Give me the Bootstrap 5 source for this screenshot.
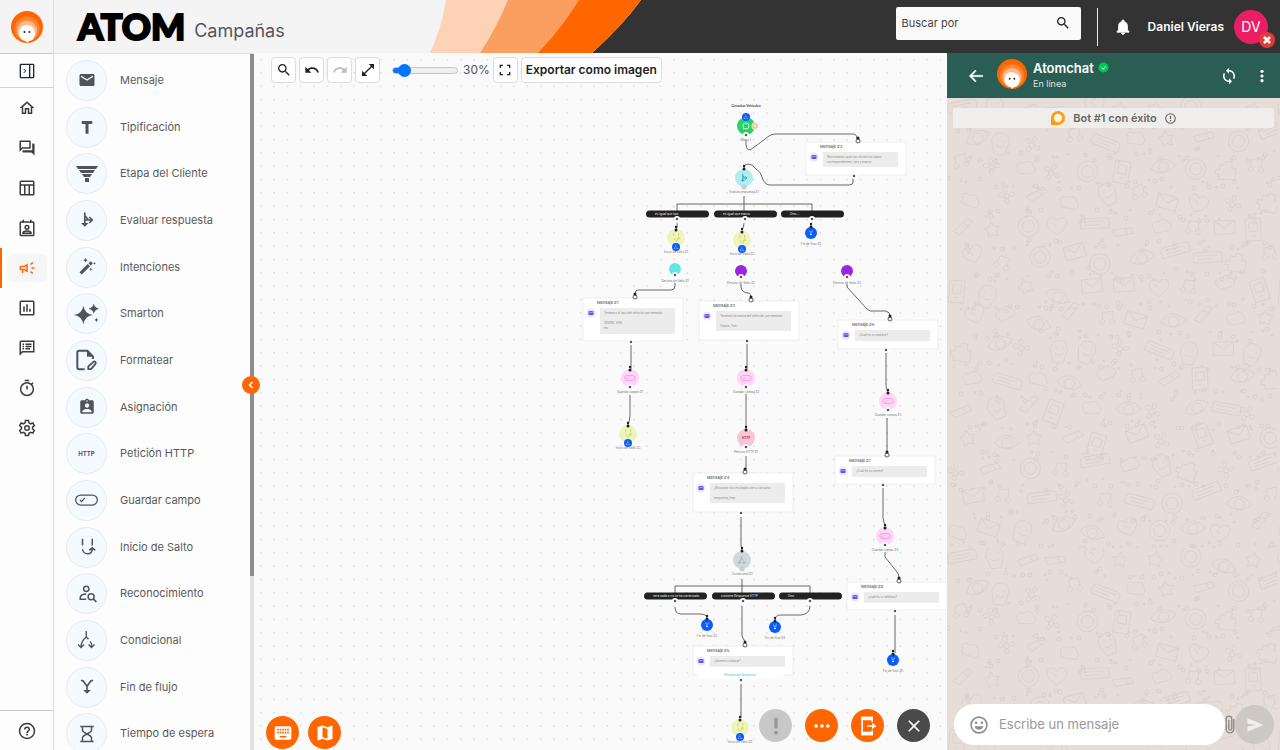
<!DOCTYPE html>
<html lang="es">
<head>
<meta charset="utf-8">
<meta name="viewport" content="width=device-width, initial-scale=1">
<title>ATOM Campañas</title>
<link href="https://cdn.jsdelivr.net/npm/bootstrap@5.3.0/dist/css/bootstrap.min.css" rel="stylesheet">
<style>
body{font-family:Inter,"Liberation Sans",sans-serif;font-size:12px;color:#333;background:#fafafa}
svg{display:block;fill:currentColor}
.ln{fill:none;stroke:currentColor;stroke-width:2}
.mid{display:grid;place-items:center}
.btn{--bs-btn-font-size:12px;--bs-btn-padding-x:0;--bs-btn-padding-y:0}
.rail{width:54px;background:#fdfdfd;border-right:1px solid #dedede;color:#3d3b3b}
.rail-logo{height:54px;background:#f4f4f4;border-bottom:1px solid #c9c9c9}
.rail-toggle{height:34px;border-bottom:1px solid #d4d4d4}
.rail-toggle svg{width:16px;height:16px}
.rail a{color:#3d3b3b;height:40px}
.rail a svg{width:18px;height:18px}
.rail a.active{color:#ff6600;box-shadow:inset 2px 0 #ff6600}
.rail a.active span{background:#f6f6f6;border-radius:6px}
.rail a span{width:40px;height:28px;display:grid;place-items:center}
.rail-help{border-top:1px solid #c9c9c9}
.topbar{height:53px;background:#f4f4f4}
.brand-zone{flex:0 0 376px;padding-left:24px;gap:9px}
.brand-word{font-family:Lato,Inter,sans-serif;font-weight:900;font-size:36px;line-height:53px;color:#000;-webkit-text-stroke:2px #000}
.brand-page{font-size:18px;line-height:24px;color:#55555f;padding-top:8px}
.top-dark{background:#333;color:#fff;padding-right:12px}
.user-name{margin:0 10px 0 16px}
.find{width:185px;height:33px;background:#fafafa;border-radius:2px;padding:0 10px 0 6px;color:#222;margin-top:-7px}
.find input{font-size:11px;color:#444;background:none;outline:0}
.find input::placeholder{color:#444}
.split-bar{width:1px;height:38px;background:#e8e8e8;margin:0 16px}
.avatar{width:34px;height:34px;background:#e91e63;font-size:14px}
.avatar-x{width:16px;height:16px;background:#e23b3b;right:-7px;bottom:-4px}
.palette{width:200px;background:#fdfdfd;border-top:1px solid #dedede}
.palette-list{min-height:708px;padding:3px 0 5px 12px}
.palette-list .btn{flex:1 0 0;gap:13px;color:#5a5a5a;border:0;font-size:11px}
.disc{width:41px;height:41px;border:1px solid #e4eaf8;background:#f4faff;color:#50535a}
.disc svg{width:18px;height:18px}
.disc .wide{width:24px}
.disc .big{width:25px;height:22px}
.disc-word{font-size:6px}
.track{width:4px;background:#e2e2e2}
.thumb{height:75%;background:#8c8c8c}
.fold{width:18px;height:18px;background:#ff6600;right:-6px;top:322px;z-index:3}
.board{background:#fafafa radial-gradient(circle,#e4e4e4 1px,transparent 1px) 0 0/calc(40px/3) calc(40px/3)}
.tools{top:4px;left:17px;gap:3px}
.tools .btn{height:26px;min-width:25px;background:#fff;border:1px solid #dcdcdc;border-radius:4px;color:#222}
.tools .btn:disabled{color:#bbb;opacity:1;background:#fff;border-color:#dcdcdc}
.tools svg{width:16px;height:16px}
.tools input{width:66px;height:12px;margin:0 2px 0 9px;appearance:none;background:none}
.tools output{color:#555}
.tools input::-webkit-slider-runnable-track{height:7px;border-radius:4px;border:1px solid #c6c6c6;background:linear-gradient(90deg,#0075ff 12px,#efefef 12px)}
.tools input::-webkit-slider-thumb{appearance:none;width:13px;height:13px;margin-top:-4px;border-radius:50%;background:#0075ff}
.fab{width:33px;height:33px;background:#ff6600;color:#fff;border:0;border-radius:50%;display:grid;place-items:center}
.fab svg{width:20px;height:20px}
.fab-off,.fab-off:disabled{background:#c8c8c8;color:#999;opacity:1}
.fab-dark{background:#4a4a4a}
.fabs-left{left:12px;bottom:1px;gap:9px}
.fabs-right{right:17px;bottom:8px;gap:13px}
.flow-label{font-size:3px;fill:#777;text-anchor:middle}
.flow-title{font-size:4px;fill:#333}
.flow-body{font-size:3px;fill:#888}
.flow-cond{font-size:3px;fill:#eee}
.flow-head{fill:#333;font-weight:600}
.flow-http{fill:#d81b50;font-weight:700}
.flow-fast{fill:#3fc1e0}
.chat{width:333px;background:#e6ddd8}
.chat-head{height:45px;background:#2a5d53;color:#fff;padding:0 10px 0 20px}
.chat-who{margin-left:6px}
.chat-name{font-size:13px;line-height:16px}
.chat-state{font-size:9px;line-height:16px;color:#dbe6e3}
.doodle{color:#d5cbc5;inset:45px 0 0 0;width:100%;height:100%}
.notice{height:20px;margin:10px 6px;background:#f0eeed;font-size:11px;border-radius:2px;color:#666}
.composer{padding:0 6px 5px 7px}
.pill{height:41px;background:#fff;border-radius:21px;padding:0 16px;gap:11px;color:#8d8d8d;width:271px}
.pill input{font-size:13px;outline:0;color:#555}
.pill input::placeholder{color:#999}
.clip{color:#8a8785}
.send{width:39px;height:39px;background:#cdc8c4;color:#f2f0ee;border:0}
</style>
</head>
<body class="vh-100 d-flex overflow-hidden">
<svg width="0" height="0" class="position-absolute" aria-hidden="true">
<defs>
<symbol id="i-atom" viewBox="0 0 32 32"><circle cx="16" cy="16" r="16" fill="#ff6600"/><circle cx="16" cy="18" r="12.5" fill="#ff8534"/><circle cx="16" cy="19.5" r="10" fill="#ffb888"/><path d="M16 14a8 8 0 0 0-7 12q1 3 6 4l1 2 2-2q6-1 6-8a8 8 0 0 0-8-8z" fill="#fff"/><circle cx="13.5" cy="21" r="1" fill="#222"/><circle cx="18.5" cy="21" r="1" fill="#222"/></symbol>
<symbol id="i-search" viewBox="0 0 24 24"><path d="M15.5 14h-.79l-.28-.27C15.41 12.59 16 11.11 16 9.5 16 5.91 13.09 3 9.5 3S3 5.91 3 9.5 5.91 16 9.5 16c1.61 0 3.09-.59 4.23-1.57l.27.28v.79l5 4.99L20.49 19l-4.99-5zm-6 0C7.01 14 5 11.99 5 9.5S7.01 5 9.5 5 14 7.01 14 9.5 11.99 14 9.5 14z"/></symbol>
<symbol id="i-mail" viewBox="0 0 24 24"><path d="M20 4H4c-1.1 0-2 .9-2 2v12c0 1.1.9 2 2 2h16c1.1 0 2-.9 2-2V6c0-1.1-.9-2-2-2zm0 4l-8 5-8-5V6l8 5 8-5v2z"/></symbol>
<symbol id="i-campo" viewBox="0 0 30 20"><g fill="none" stroke="currentColor" stroke-width="1.5"><rect x="2" y="4" width="26" height="12" rx="6"/><path d="M7 10l2 2 4-4.5"/></g></symbol>
<symbol id="i-salto" viewBox="0 0 24 24"><g fill="none" stroke="currentColor" stroke-width="2"><path d="M6 1v9M19 1v9M6 15q1 6 7 6 6 0 6-7M15 16.500l4-3.500 4 3.500"/></g></symbol>
<symbol id="i-cond" viewBox="0 0 24 24"><g fill="none" stroke="currentColor" stroke-width="1.8"><path d="M11 0v8Q4 14 4 21M11 8l3 3M16 14l2 3v5M0 18l4 4 4-4M14 18l4 4 4-4"/></g></symbol>
<symbol id="i-fin" viewBox="0 0 24 24"><g fill="none" stroke="currentColor" stroke-width="2.2"><path d="M4 3l3 1 5 7 5-7 3-1M12 11v8"/></g><path d="M7 16h10l-5 5z"/></symbol>
<symbol id="i-eval" viewBox="0 0 24 24"><g fill="none" stroke="currentColor" stroke-width="2.2"><path d="M9 2v17M9 12h10M15 8l4 4-4 4M9 6l5 6"/></g><path d="M4 16h10l-5 5z"/></symbol>
</defs>
</svg>

<nav class="rail d-flex flex-column flex-shrink-0" aria-label="Principal">
  <div class="rail-logo mid"><svg width="32" height="32"><use href="#i-atom"/></svg></div>
  <button class="rail-toggle btn rounded-0 border-top-0 border-start-0 border-end-0 d-flex align-items-center justify-content-center" aria-label="Expandir menú"><svg viewBox="0 0 24 24"><g class="ln"><rect x="2" y="2" width="20" height="20" rx="1"/><path d="M16 2v20"/><path d="M7 9l3 3-3 3" stroke-width="1.5"/></g></svg></button>
  <a href="#" class="d-flex align-items-center justify-content-center" aria-label="Inicio"><span><svg viewBox="0 0 24 24"><path d="M12 5.69l5 4.5V18h-2v-6H9v6H7v-7.81l5-4.5M12 3L2 12h3v8h6v-6h2v6h6v-8h3L12 3z"/></svg></span></a>
  <a href="#" class="d-flex align-items-center justify-content-center" aria-label="Chats"><span><svg viewBox="0 0 24 24"><path d="M15 4v7H5.17L4 12.17V4h11m1-2H3c-.55 0-1 .45-1 1v14l4-4h10c.55 0 1-.45 1-1V3c0-.55-.45-1-1-1zm5 4h-2v9H6v2c0 .55.45 1 1 1h11l4 4V7c0-.55-.45-1-1-1z"/></svg></span></a>
  <a href="#" class="d-flex align-items-center justify-content-center" aria-label="Tablas"><span><svg viewBox="0 0 24 24"><g class="ln"><rect x="3" y="3" width="18" height="18" rx="1"/><path d="M3 8h18M9 8v13M15 8v13"/></g></svg></span></a>
  <a href="#" class="d-flex align-items-center justify-content-center" aria-label="Contactos"><span><svg viewBox="0 0 24 24"><g class="ln"><rect x="3" y="4" width="18" height="18" rx="1"/><path d="M7 1v4M17 1v4"/><circle cx="12" cy="11" r="2.5"/><path d="M6.500 19q0-3 5.500-3t5.500 3z"/></g></svg></span></a>
  <a href="#" class="active d-flex align-items-center justify-content-center" aria-label="Campañas"><span><svg viewBox="0 0 24 24"><path d="M18 11v2h4v-2h-4zm-2 6.61c.96.71 2.21 1.65 3.2 2.39.4-.53.8-1.07 1.2-1.6-.99-.74-2.24-1.68-3.2-2.4-.4.54-.8 1.08-1.2 1.61zM20.4 5.6c-.4-.53-.8-1.07-1.2-1.6-.99.74-2.24 1.68-3.2 2.4.4.53.8 1.07 1.2 1.6.96-.72 2.21-1.65 3.2-2.4zM4 9c-1.1 0-2 .9-2 2v2c0 1.1.9 2 2 2h1v4h2v-4h1l5 3V6L8 9H4zm5.03 1.71L11 9.53v4.94l-1.97-1.18-.48-.29H4v-2h4.55l.48-.29z"/></svg></span></a>
  <a href="#" class="d-flex align-items-center justify-content-center" aria-label="Reportes"><span><svg viewBox="0 0 24 24"><g class="ln"><rect x="3" y="3" width="18" height="18" rx="1"/><path d="M8 10v7M12 7v10M16 13v4"/></g></svg></span></a>
  <a href="#" class="d-flex align-items-center justify-content-center" aria-label="Plantillas"><span><svg viewBox="0 0 24 24"><g class="ln"><path d="M3 20V4q0-1 1-1h17v14H6z"/><path d="M6 7h2M6 10h2M6 13h2M10 7h8M10 10h8M10 13h6" stroke-width="1.7"/></g></svg></span></a>
  <a href="#" class="d-flex align-items-center justify-content-center" aria-label="Horarios"><span><svg viewBox="0 0 24 24"><g class="ln"><circle cx="12" cy="13.5" r="8.5"/><path d="M9 2h6M12 9v5M18 7l2-2"/></g></svg></span></a>
  <a href="#" class="d-flex align-items-center justify-content-center" aria-label="Ajustes"><span><svg viewBox="0 0 24 24"><g class="ln"><path d="M10 2h4l.6 3.1 2.2 1.3 3-1.1 2 3.500-2.400 2v2.500l2.400 2-2 3.500-3-1.1-2.200 1.300L14 22h-4l-.6-3-2.200-1.300-3 1.100-2-3.500 2.400-2v-2.500l-2.400-2 2-3.500 3 1.100 2.200-1.300z"/><circle cx="12" cy="12" r="3"/></g></svg></span></a>
  <a href="#" class="rail-help mt-auto d-flex align-items-center justify-content-center" aria-label="Ayuda"><span><svg viewBox="0 0 24 24"><g class="ln"><circle cx="12" cy="12" r="10"/><path d="M9 10q0-3 3-3t3 3q0 1-1.500 2.200T12 15M12 16v2"/></g></svg></span></a>
</nav>

<div class="flex-grow-1 d-flex flex-column overflow-hidden">
  <header class="topbar d-flex flex-shrink-0">
    <div class="brand-zone d-flex align-items-center"><span class="brand-word">ATOM</span><span class="brand-page">Campañas</span></div>
    <svg width="212" height="53" class="flex-shrink-0" aria-hidden="true"><path d="M211 0Q193 25 162 53h50V0z" fill="#333"/><path d="M16 0Q12 27 0 53h55L88 0z" fill="#fdd2b6"/><path d="M78 0Q67 27 50 53h65l45-53z" fill="#fb9f61"/><path d="M149 0Q132 28 108 53h54Q190 28 211 0z" fill="#ff6600"/></svg>
    <div class="top-dark flex-grow-1 d-flex align-items-center justify-content-end">
      <label class="find d-flex align-items-center"><input class="border-0 p-0 flex-grow-1 w-100" type="search" placeholder="Buscar por" aria-label="Buscar por"><svg width="16" height="16" class="flex-shrink-0"><use href="#i-search"/></svg></label>
      <div class="split-bar"></div>
      <button class="btn text-white border-0" aria-label="Notificaciones"><svg width="18" height="20" viewBox="0 0 24 24"><path d="M12 22c1.100 0 2-.9 2-2h-4c0 1.100.89 2 2 2zm6-6v-5c0-3.070-1.640-5.640-4.500-6.320V4c0-.83-.67-1.500-1.500-1.500s-1.500.67-1.500 1.500v.68C7.630 5.360 6 7.920 6 11v5l-2 2v1h16v-1l-2-2z" stroke="currentColor"/></svg></button>
      <span class="user-name fw-semibold">Daniel Vieras</span>
      <div class="avatar rounded-circle position-relative d-flex align-items-center justify-content-center">DV<span class="avatar-x mid rounded-circle position-absolute"><svg width="8" height="8" viewBox="0 0 8 8"><path d="M1 1l6 6M7 1L1 7" stroke="#fff" stroke-width="2.5"/></svg></span></div>
    </div>
  </header>

  <div class="flex-grow-1 d-flex overflow-hidden">
    <aside class="palette position-relative d-flex flex-shrink-0">
      <div class="flex-grow-1 overflow-hidden h-100">
      <div class="palette-list d-flex flex-column">
        <button class="btn d-flex align-items-center"><span class="disc mid rounded-circle"><svg><use href="#i-mail"/></svg></span>Mensaje</button>
        <button class="btn d-flex align-items-center"><span class="disc mid rounded-circle"><svg viewBox="0 0 24 24"><path d="M5 4h14v4h-5v13h-4V8H5z"/></svg></span>Tipificación</button>
        <button class="btn d-flex align-items-center"><span class="disc mid rounded-circle"><svg viewBox="0 0 22 18" class="wide"><path d="M0 1h22l-2 3H2zM3 5h16l-2 3H5zM6 9h10l-2 3H8zM9 13h4v4H9z"/></svg></span>Etapa del Cliente</button>
        <button class="btn d-flex align-items-center"><span class="disc mid rounded-circle"><svg><use href="#i-eval"/></svg></span>Evaluar respuesta</button>
        <button class="btn d-flex align-items-center"><span class="disc mid rounded-circle"><svg viewBox="0 0 24 24" class="wide"><path d="M2 19L13 8l3 3L5 22zM14 7l2-2q1-1 2 0l1 1q1 1 0 2l-2 2zM10 0l1 2 2 1-2 1-1 2-1-2-2-1 2-1zM22 5l.7 1.500L24 7l-1.300.6L22 9l-.7-1.400L20 7l1.300-.5zM17 13l.7 1.400L19 15l-1.300.6L17 17l-.7-1.400L15 15l1.300-.6z"/></svg></span>Intenciones</button>
        <button class="btn d-flex align-items-center"><span class="disc mid rounded-circle"><svg viewBox="0 0 24 20" class="big"><path d="M9 2q1.200 7.800 9 9-7.800 1.200-9 9-1.200-7.800-9-9 7.800-1.200 9-9zM19 0q.8 4.200 5 5-4.200.8-5 5-.8-4.200-5-5 4.200-.8 5-5zM21.500 13.500l.6 1.600 1.600.6-1.600.6-.6 1.600-.6-1.600-1.600-.6 1.600-.6z"/></svg></span>Smarton</button>
        <button class="btn d-flex align-items-center"><span class="disc mid rounded-circle"><svg viewBox="0 0 24 24" class="big"><path d="M10 22H4q-2 0-2-2V4q0-2 2-2h9l6 6v3" fill="none" stroke="currentColor" stroke-width="2.2"/><path d="M12.500 2L19 8.500h-6.500z"/><path d="M14 22v-3l5.500-5q1.200-1 2.200 0 1 1.200 0 2.200L17 22z" fill="none" stroke="currentColor" stroke-width="2"/></svg></span>Formatear</button>
        <button class="btn d-flex align-items-center"><span class="disc mid rounded-circle"><svg viewBox="0 0 24 24"><path d="M19 3h-4.180C14.400 1.840 13.300 1 12 1c-1.300 0-2.400.84-2.820 2H5c-1.100 0-2 .9-2 2v14c0 1.100.9 2 2 2h14c1.100 0 2-.9 2-2V5c0-1.100-.9-2-2-2zm-7 0c.55 0 1 .45 1 1s-.45 1-1 1-1-.45-1-1 .45-1 1-1zm0 4c1.660 0 3 1.340 3 3s-1.340 3-3 3-3-1.340-3-3 1.340-3 3-3zm6 12H6v-1.400c0-2 4-3.100 6-3.100s6 1.100 6 3.100V19z"/></svg></span>Asignación</button>
        <button class="btn d-flex align-items-center"><span class="disc disc-word mid rounded-circle fw-bold">HTTP</span>Petición HTTP</button>
        <button class="btn d-flex align-items-center"><span class="disc mid rounded-circle"><svg class="big"><use href="#i-campo"/></svg></span>Guardar campo</button>
        <button class="btn d-flex align-items-center"><span class="disc mid rounded-circle"><svg><use href="#i-salto"/></svg></span>Inicio de Salto</button>
        <button class="btn d-flex align-items-center"><span class="disc mid rounded-circle"><svg viewBox="0 0 26 24" class="wide"><g class="ln"><circle cx="12" cy="5" r="3.5"/><path d="M12 12q-8 0-8 5v2h8"/><circle cx="18.500" cy="15.5" r="4"/><path d="M21.500 18.500l4 4"/></g></svg></span>Reconocimiento</button>
        <button class="btn d-flex align-items-center"><span class="disc mid rounded-circle"><svg><use href="#i-cond"/></svg></span>Condicional</button>
        <button class="btn d-flex align-items-center"><span class="disc mid rounded-circle"><svg><use href="#i-fin"/></svg></span>Fin de flujo</button>
        <button class="btn d-flex align-items-center"><span class="disc mid rounded-circle"><svg viewBox="0 0 24 24"><g class="ln"><path d="M3 2h18M3 22h18M6 2v5q0 2 6 5 6-3 6-5V2M6 22v-5q0-2 6-5 6 3 6 5v5"/></g></svg></span>Tiempo de espera</button>
      </div>
      </div>
      <div class="track"><div class="thumb"></div></div>
      <button class="fold mid btn text-white border-0 rounded-circle position-absolute" aria-label="Contraer panel"><svg width="8" height="8" viewBox="0 0 8 8"><path d="M5.500 1L2.500 4l3 3" fill="none" stroke="currentColor" stroke-width="1.5"/></svg></button>
    </aside>

    <main class="board position-relative flex-grow-1 overflow-hidden">
      <svg id="flow" width="693" height="697" viewBox="254 53 693 697" role="img" aria-label="Diagrama del flujo"></svg>
      <div class="tools position-absolute d-flex align-items-center">
        <button class="btn mid" aria-label="Buscar"><svg><use href="#i-search"/></svg></button>
        <button class="btn mid" aria-label="Deshacer"><svg viewBox="0 0 24 24"><path d="M12.500 8c-2.650 0-5.050.99-6.900 2.600L2 7v9h9l-3.620-3.620c1.390-1.160 3.160-1.880 5.120-1.880 3.540 0 6.550 2.310 7.600 5.500l2.370-.78C21.080 11.030 17.150 8 12.500 8z"/></svg></button>
        <button class="btn mid" aria-label="Rehacer" disabled><svg viewBox="0 0 24 24"><path d="M18.400 10.600C16.550 8.990 14.150 8 11.500 8c-4.650 0-8.580 3.030-9.960 7.220L3.900 16c1.050-3.190 4.050-5.500 7.600-5.500 1.950 0 3.730.72 5.120 1.880L13 16h9V7l-3.600 3.600z"/></svg></button>
        <button class="btn mid" aria-label="Ajustar"><svg viewBox="0 0 24 24"><path d="M21 11V3h-8l3.290 3.290-10 10L3 13v8h8l-3.290-3.290 10-10z"/></svg></button>
        <input type="range" min="0" max="100" value="10" aria-label="Zoom"><output>30%</output>
        <button class="btn mid" aria-label="Pantalla completa"><svg viewBox="0 0 24 24"><path d="M6 15H4v5h5v-2H6v-3zM4 9h2V6h3V4H4v5zm14 9h-3v2h5v-5h-2v3zM15 4v2h3v3h2V4h-5z"/></svg></button>
        <button class="btn fw-semibold px-1 text-nowrap">Exportar como imagen</button>
      </div>
      <div class="fabs-left position-absolute d-flex">
        <button class="fab" aria-label="Atajos de teclado"><svg viewBox="0 0 24 24"><path fill-rule="evenodd" d="M4 4h16q2 0 2 2v12q0 2-2 2H4q-2 0-2-2V6q0-2 2-2zm1 3v2h2V7zm3 0v2h2V7zm3 0v2h2V7zm3 0v2h2V7zm3 0v2h2V7zM5 10.500v2h2v-2zm3 0v2h2v-2zm3 0v2h2v-2zm3 0v2h2v-2zm3 0v2h2v-2zM8 15.500v2h8v-2z"/></svg></button>
        <button class="fab" aria-label="Mapa"><svg viewBox="0 0 24 24"><path d="M20.500 3l-.16.03L15 5.100 9 3 3.360 4.900c-.21.07-.36.25-.36.48V20.500c0 .28.22.5.5.5l.16-.03L9 18.900l6 2.100 5.640-1.900c.21-.07.36-.25.36-.48V3.500c0-.28-.22-.5-.5-.5zM15 19l-6-2.110V5l6 2.110V19z"/></svg></button>
      </div>
      <div class="fabs-right position-absolute d-flex">
        <button class="fab fab-off" disabled aria-label="Errores"><svg viewBox="0 0 24 24"><path d="M10 2h4v13h-4zM10 18h4v4h-4z"/></svg></button>
        <button class="fab" aria-label="Más opciones"><svg viewBox="0 0 24 24"><circle cx="5" cy="12" r="2.2"/><circle cx="12" cy="12" r="2.2"/><circle cx="19" cy="12" r="2.2"/></svg></button>
        <button class="fab" aria-label="Probar en el móvil"><svg viewBox="0 0 24 24"><path d="M17 7V2H5v20h12v-5" class="ln"/><path d="M4 1h14v4H4zM4 19h14v4H4zM17 8l5 4-5 4v-3h-6v-2h6z"/></svg></button>
        <button class="fab fab-dark" aria-label="Cerrar"><svg viewBox="0 0 24 24"><path d="M19 6.410L17.590 5 12 10.590 6.410 5 5 6.410 10.590 12 5 17.590 6.410 19 12 13.410 17.590 19 19 17.590 13.410 12z"/></svg></button>
      </div>
    </main>

    <section class="chat position-relative d-flex flex-column flex-shrink-0 overflow-hidden" aria-label="Chat">
      <svg class="doodle position-absolute" aria-hidden="true"><defs><pattern id="doodles" width="330" height="450" patternUnits="userSpaceOnUse"></pattern></defs><rect width="100%" height="100%" fill="url(#doodles)"/></svg>
      <div class="chat-head position-relative d-flex align-items-center">
        <button class="btn text-white border-0 me-2" aria-label="Volver"><svg width="18" height="18" viewBox="0 0 24 24"><path d="M21 11H6.800l5.600-5.600L11 4l-8 8 8 8 1.400-1.400L6.800 13H21z" stroke="currentColor" stroke-width=".5"/></svg></button>
        <svg width="30" height="30" class="ms-1 mb-1"><use href="#i-atom"/></svg>
        <div class="chat-who me-auto"><div class="chat-name fw-semibold d-flex align-items-center gap-1">Atomchat<svg width="11" height="11" viewBox="0 0 12 12"><circle cx="6" cy="6" r="5.5" fill="#00c853"/><path d="M3.500 6l2 2L8.500 4.500" fill="none" stroke="#fff"/></svg></div><div class="chat-state">En línea</div></div>
        <button class="btn text-white border-0" aria-label="Reiniciar"><svg width="18" height="18" viewBox="0 0 24 24"><path d="M12 4V1L8 5l4 4V6c3.310 0 6 2.690 6 6 0 1.010-.25 1.970-.7 2.800l1.460 1.460C19.540 15.030 20 13.570 20 12c0-4.420-3.580-8-8-8zm0 14c-3.310 0-6-2.690-6-6 0-1.010.25-1.970.7-2.800L5.240 7.740C4.460 8.970 4 10.430 4 12c0 4.420 3.580 8 8 8v3l4-4-4-4v3z"/></svg></button>
        <button class="btn text-white border-0 ms-3" aria-label="Más"><svg width="16" height="18" viewBox="0 0 24 24"><circle cx="12" cy="5" r="2.4"/><circle cx="12" cy="12" r="2.4"/><circle cx="12" cy="19" r="2.4"/></svg></button>
      </div>
      <div class="notice position-relative fw-semibold d-flex align-items-center justify-content-center">
        <svg width="14" height="14" viewBox="0 0 14 14" class="me-2"><path d="M0 14V7a7 7 0 1 1 7 7z" fill="#ff9d0a"/><circle cx="7" cy="7" r="4.2" fill="#fff3e4"/></svg>Bot #1 con éxito<svg width="11" height="11" viewBox="0 0 12 12" class="ms-2"><circle cx="6" cy="6" r="5.2" fill="none" stroke="currentColor" stroke-width="1.2"/><path d="M5.300 3h1.400v3.500H5.300zM5.300 7.500h1.400V9H5.300z"/></svg>
      </div>
      <form class="composer position-relative mt-auto d-flex align-items-center justify-content-between">
        <label class="pill d-flex align-items-center"><svg width="18" height="18" viewBox="0 0 20 20" class="flex-shrink-0"><circle cx="10" cy="10" r="8.8" fill="none" stroke="currentColor" stroke-width="1.8"/><circle cx="6.8" cy="7.5" r="1.4"/><circle cx="13.2" cy="7.5" r="1.4"/><path d="M5 11.500h10q-1.200 3.800-5 3.800t-5-3.800z"/></svg><input class="border-0 p-0 w-100" type="text" placeholder="Escribe un mensaje" aria-label="Escribe un mensaje"></label>
        <button type="button" class="clip btn border-0" aria-label="Adjuntar"><svg width="10" height="19" viewBox="0 0 10 19"><path d="M8.800 4v10a3.800 3.800 0 0 1-7.600 0V4a2.800 2.800 0 0 1 5.600 0v9.500a1.500 1.500 0 0 1-3 0V5" fill="none" stroke="currentColor" stroke-width="1.3"/></svg></button>
        <button type="button" class="send mid rounded-circle" aria-label="Enviar"><svg width="18" height="18" viewBox="0 0 24 24"><path d="M2 21l21-9L2 3v7l12 2-12 2z"/></svg></button>
      </form>
    </section>
  </div>
</div>
<script src="https://cdn.jsdelivr.net/npm/bootstrap@5.3.0/dist/js/bootstrap.bundle.min.js"></script>
<script>
const icon=(id,x,y,s,c,h=s)=>`<use href="#i-${id}" x="${x-s/2}" y="${y-h/2}" width="${s}" height="${h}" color="${c}"/>`;
const disc=(x,y,r,c)=>`<circle cx="${x}" cy="${y}" r="${r}" fill="${c}"/>`;
const label=(x,y,t,k='')=>`<text class="flow-label ${k}" x="${x}" y="${y+1}">${t}</text>`;
const port=(x,y)=>disc(x,y,3,'#fff')+`<path d="M${x-1.2} ${y}h2.4M${x} ${y-1.2}v2.4" stroke="#111" stroke-width=".9"/>`;
const tip=(x,y)=>disc(x,y-3,1.2,'#222')+disc(x,y,1.5,'#222');

// connections between nodes
const wires=['M746 140v5q1 8 7 3l16-12q3-2 6-2h78q4 0 4 5','M853 178v4q0 3-4 3h-80q-5-1-7-8-1-5-6-8-3-5-8-5-4 0-4 4',
'M744 196v17M677 212v-8h135v8','M677 223q1 4-1 7','M744 223q0 4-2 7','M811 223v4','M675 283v3q0 4-4 4h-33q-3 0-3 4','M741 284v3q1 6 7 6 3 0 3 5','M847 284v3l20 22q3 3 7 2h12q4 1 4 5',
'M631 345v24M630 395v20q0 5-2 10','M747 344v25M746 394v36M746 456v14','M886 353v32q0 4 2 7M887 418v34','M741 517v28l1 6','M883 488v30l2 9','M885 552v5l12 15q2 2 2 6',
'M742 579v18M675 594v-8h135v8','M675 607q0 7 6 7h18q8 0 8 4','M742 606v30l3 6','M810 606q0 8-9 9h-20q-6 0-6 5','M895 615v38','M741 684v34'];

// message cards: x, y, height, box height, title, lines
const cards=[[806,142,33,15,'Mensaje #3',['Necesitamos que nos envíes los datos','correspondientes, tipo y marca']],
[583,298,43,26,'Mensaje #1',['Tenemos el tipo del vehículo por ejemplo','','SEDÁN, VAN','etc']],
[699,301,39,20,'Mensaje #2',['Tenemos la marca del vehículo, por ejemplo','','Toyota, Fiat']],
[838,320,29,11,'Mensaje #6',['¿Cuál es tu nombre?']],[693,473,39,20,'Mensaje #4',['¿Buscaste los resultados de tu consulta','','respuesta_http']],
[835,456,28,11,'Mensaje #7',['¿Cuál es tu correo?']],[847,582,28,11,'Mensaje #8',['¿cuál es tu teléfono?']],[693,646,29,11,'Mensaje #5',['¿Quieres comprar?']]];

let s=`<g fill="none" stroke="#444" stroke-width=".8">${wires.map(d=>`<path d="${d}"/>`).join('')}</g>`;
for(const [x,y,h,bh,t,ls] of cards){
  s+=`<rect x="${x}" y="${y}" width="100" height="${h}" fill="#fff" stroke="#e8e8e8" stroke-width=".7"/><text class="flow-title" x="${x+14}" y="${y+6}">${t}</text><rect x="${x+17}" y="${y+10}" width="75" height="${bh}" fill="#ececec"/>`+disc(x+8,y+15,4.5,'#ece6ff')+icon('mail',x+8,y+15,6,'#6a4df0');
  ls.forEach((l,i)=>s+=`<text class="flow-body" x="${x+21}" y="${y+16+i*5}">${l}</text>`);
  s+=`<circle cx="${x+52}" cy="${y-1}" r="2" fill="#fff" stroke="#333" stroke-width=".8"/>`+disc(x+52,y-4,1.5,'#222')+port(x+48,y+h+(t.endsWith('5')?5:1));
}
s+=`<rect x="698" y="671" width="85" height="8" rx="1" fill="#fff"/>`+label(740,675,'Respuestas dinámicas','flow-fast');

// condition pills
for(const [x,y,t] of [[646,214,'es igual que tipo'],[714,214,'es igual que marca'],[781,214,'Otro...'],[644,596,'será nada o no se ha contestado'],[712,596,'contiene Respuesta HTTP'],[779,596,'Otro']])
  s+=`<rect x="${x}" y="${y-3.5}" width="63" height="7" rx="3.5" fill="#222"/><text class="flow-cond" x="${x+9}" y="${y+1}">${t}</text>`+port(x+31,y+5);

const badge=(x,y)=>disc(x,y,4,'#0b5cff')+icon('cond',x,y,5,'#fff');
s+=label(746,106,'Consultar Vehículos','flow-head')+disc(746,126,9,'#25d366')+`<circle cx="746" cy="126" r="3" fill="none" stroke="#fff" stroke-width=".8"/><path d="M743 129.5v-2l1.5 1.3z" fill="#fff"/>`+disc(755,126,3.5,'#fff')+`<rect x="753" y="124" width="4" height="4" rx="1" fill="none" stroke="#ff8a3c"/>`+badge(746,117)+port(746,135)+label(746,140,'Menú 1');
s+=disc(744,178,9,'#b2ebf2')+icon('eval',744,178,10,'#22a9bd')+disc(744,187,2.5,'#ccc')+label(744,192,'Evaluar respuesta #1')+tip(744,169);
for(const [x,y,n] of [[676,238,1],[742,240,2],[628,434,3],[740,728,4]]) s+=disc(x,y,9,'#eef4bd')+icon('salto',x,y-1,9,'#c9cf3c')+badge(x,y+9)+label(x,y+14,'Inicio de Salto #'+n)+tip(x,y-8);
for(const [x,y,n] of [[811,233,2],[707,625,3],[775,627,4],[893,660,5]]) s+=disc(x,y,6,'#0b5cff')+icon('fin',x,y,6,'#fff')+label(x,y+11,'Fin de flujo #'+n)+tip(x,y-6);
for(const [x,y,c,n] of [[675,269,'#5ee7e7',1],[741,271,'#9b26e0',2],[847,271,'#9b26e0',3]]) s+=disc(x,y,6,c)+port(x,y+6)+label(x,y+12,'Destino de Salto #'+n);
for(const [x,y,n] of [[630,378,1],[746,378,2],[888,401,3],[885,536,4]]) s+=disc(x,y,9,'#ffd6f5')+icon('campo',x,y,12,'#ff6fd8',8)+port(x,y+9)+label(x,y+14,'Guardar campo #'+n)+tip(x,y-8);
s+=disc(746,438,9,'#f5c6d3')+label(746,438,'HTTP','flow-http')+port(746,447)+label(746,452,'Petición HTTP #1')+tip(746,430);
s+=disc(742,560,9,'#cfd8dc')+icon('cond',742,560,8,'#78909c')+disc(742,569,2.5,'#ccc')+label(742,574,'Condicional #1')+tip(742,551);
document.getElementById('flow').innerHTML=s;

// chat wallpaper: line drawings scattered over a repeating tile
const art=['M0 0h24v16H0zM0 0l12 9L24 0','M12 0a12 12 0 1 0 .1 0M12 5a7 7 0 1 0 .1 0','M0 4q0-4 4-4h26q4 0 4 4v8H0zM5 4h23M5 8h18','M8 0l3 6 6 1-4 5 1 6-6-3-6 3 1-6-4-5 6-1z','M0 6q0-6 6-6 4 0 5 4 1-4 6-4 6 0 6 6 0 7-12 14Q0 13 0 6M6 6q3 0 5 5','M0 0h18v26H0zM4 5h10v10H4zM7 20h4','M4 12a5 5 0 1 1 6-8 7 7 0 0 1 12 3 5 5 0 0 1-2 9H6q-4 0-2-4','M0 10L20 0l5 5L6 16zM14 3l5 6','M8 8V0l12-2v10M8 8a3 3 0 1 0 .1 0M20 8a3 3 0 1 0 .1 0','M5 0q8-4 14 0l3 8-4 16H6L1 8zM7 7h2M15 7h2M7 13q5 4 10 0','M0 10h5V4h6V0h8v7h5v14H4v-6H0z','M0 12Q14-6 30 12 14 26 0 12M15 6a6 6 0 1 0 .1 0','M9 9a3 3 0 1 0 .1 0M9 8Q4 0 10 1q4 2 0 7M12 11q8-4 7 2-3 3-7-1M9 14q3 8-3 6-3-3 2-7M6 11Q-2 12 0 7q4-3 7 2'];
let seed=7;const rnd=()=>(seed=(seed*16807)%2147483647)/2147483647;
let p='';
for(let r=0;r<15;r++)for(let c=0;c<10;c++){
  const x=(c*33+r%2*12+rnd()*5).toFixed(0),y=(r*30+rnd()*6).toFixed(0),a=(rnd()*50-25).toFixed(0);
  p+=`<path d="${art[Math.floor(rnd()*art.length)]}" transform="translate(${x} ${y}) rotate(${a}) scale(.85)"/>`;
  for(let k=0;k<4;k++)p+=`<circle cx="${(+x+rnd()*32).toFixed(0)}" cy="${(+y+20+rnd()*9).toFixed(0)}" r="${k%2+1}"/>`;
}
document.getElementById('doodles').innerHTML=`<g fill="none" stroke="currentColor" stroke-width="1" opacity=".75">${p}</g>`;
</script>
</body>
</html>
